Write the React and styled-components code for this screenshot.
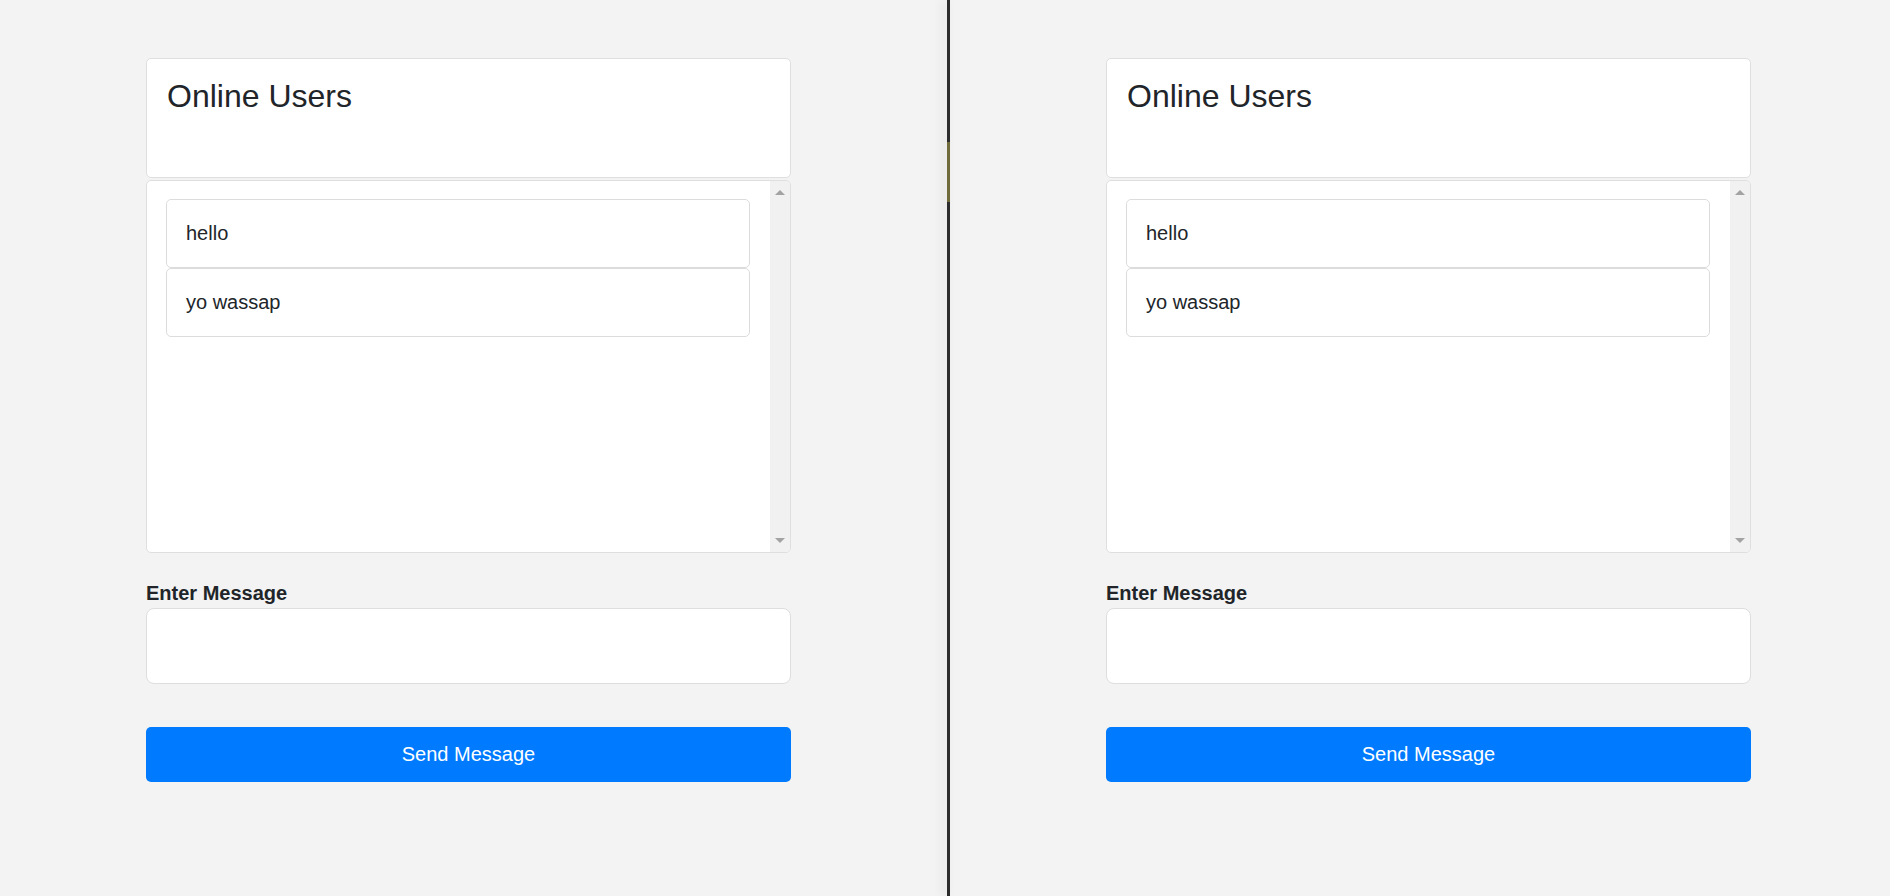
import React from "react";
import styled, { createGlobalStyle } from "styled-components";

const GlobalStyle = createGlobalStyle`
  html, body, #root {
    margin: 0;
    padding: 0;
    height: 100%;
  }
  body {
    background: #f3f3f3;
    font-family: "Liberation Sans", Arial, sans-serif;
    color: #212529;
  }
  * {
    box-sizing: border-box;
  }
`;

const Screen = styled.div`
  display: flex;
  height: 100vh;
  overflow: hidden;
  background: #f3f3f3;
`;

const Pane = styled.div`
  width: ${(p) => (p.$grow ? "auto" : "947px")};
  flex: ${(p) => (p.$grow ? "1" : "none")};
  padding-top: 58px;
  padding-left: ${(p) => p.$offset}px;
`;

const Divider = styled.div`
  width: 3px;
  flex: none;
  background: linear-gradient(
    to bottom,
    #2b2b2b 142px,
    #6e6a3c 142px,
    #6e6a3c 202px,
    #2b2b2b 202px
  );
  box-shadow: -4px 0 10px rgba(0, 0, 0, 0.12);
`;

const Chat = styled.div`
  width: 645px;
  display: flex;
  flex-direction: column;
`;

const HeaderCard = styled.div`
  height: 120px;
  margin-bottom: 2px;
  padding: 20px 20px;
  background: #fff;
  border: 1px solid #dfdfdf;
  border-radius: 5px;
`;

const Title = styled.h2`
  margin: 0;
  font-size: 32px;
  font-weight: 400;
  line-height: 1.1;
`;

const MessageBox = styled.div`
  height: 373px;
  display: flex;
  background: #fff;
  border: 1px solid #dfdfdf;
  border-radius: 5px;
  overflow: hidden;
`;

const MessageList = styled.ul`
  flex: 1;
  margin: 0;
  padding: 18px 20px 18px 19px;
  list-style: none;
  display: flex;
  flex-direction: column;
`;

const MessageItem = styled.li`
  height: 69px;
  display: flex;
  align-items: center;
  padding: 0 19px;
  font-size: 20px;
  border: 1px solid #dcdcdc;
  border-radius: 5px;
`;

const ScrollTrack = styled.div`
  width: 20px;
  flex: none;
  background: #f1f1f1;
  display: flex;
  flex-direction: column;
  justify-content: space-between;
  align-items: center;
  padding: 9px 0 9px;
`;

const Arrow = styled.div`
  width: 0;
  height: 0;
  border-left: 5px solid transparent;
  border-right: 5px solid transparent;
  ${(p) =>
    p.$down
      ? "border-top: 5px solid #a3a3a3;"
      : "border-bottom: 5px solid #a3a3a3;"}
`;

const Label = styled.label`
  display: block;
  margin-top: 25px;
  font-size: 20px;
  font-weight: 700;
  line-height: 30px;
`;

const MessageInput = styled.textarea`
  display: block;
  width: 100%;
  height: 76px;
  padding: 10px 16px;
  font-family: inherit;
  font-size: 20px;
  background: #fff;
  border: 1px solid #dedede;
  border-radius: 8px;
  resize: none;
  outline: none;
`;

const SendButton = styled.button`
  margin-top: 43px;
  height: 55px;
  width: 100%;
  font-family: inherit;
  font-size: 20px;
  color: #fff;
  background: #007bff;
  border: none;
  border-radius: 5px;
  cursor: pointer;
`;

const messages = ["hello", "yo wassap"];

function ChatWindow() {
  return (
    <Chat>
      <HeaderCard>
        <Title>Online Users</Title>
      </HeaderCard>
      <MessageBox>
        <MessageList>
          {messages.map((m) => (
            <MessageItem key={m}>{m}</MessageItem>
          ))}
        </MessageList>
        <ScrollTrack>
          <Arrow />
          <Arrow $down />
        </ScrollTrack>
      </MessageBox>
      <Label>Enter Message</Label>
      <MessageInput />
      <SendButton>Send Message</SendButton>
    </Chat>
  );
}

export default function App() {
  return (
    <>
      <GlobalStyle />
      <Screen>
        <Pane $offset={146}>
          <ChatWindow />
        </Pane>
        <Divider />
        <Pane $grow $offset={156}>
          <ChatWindow />
        </Pane>
      </Screen>
    </>
  );
}
